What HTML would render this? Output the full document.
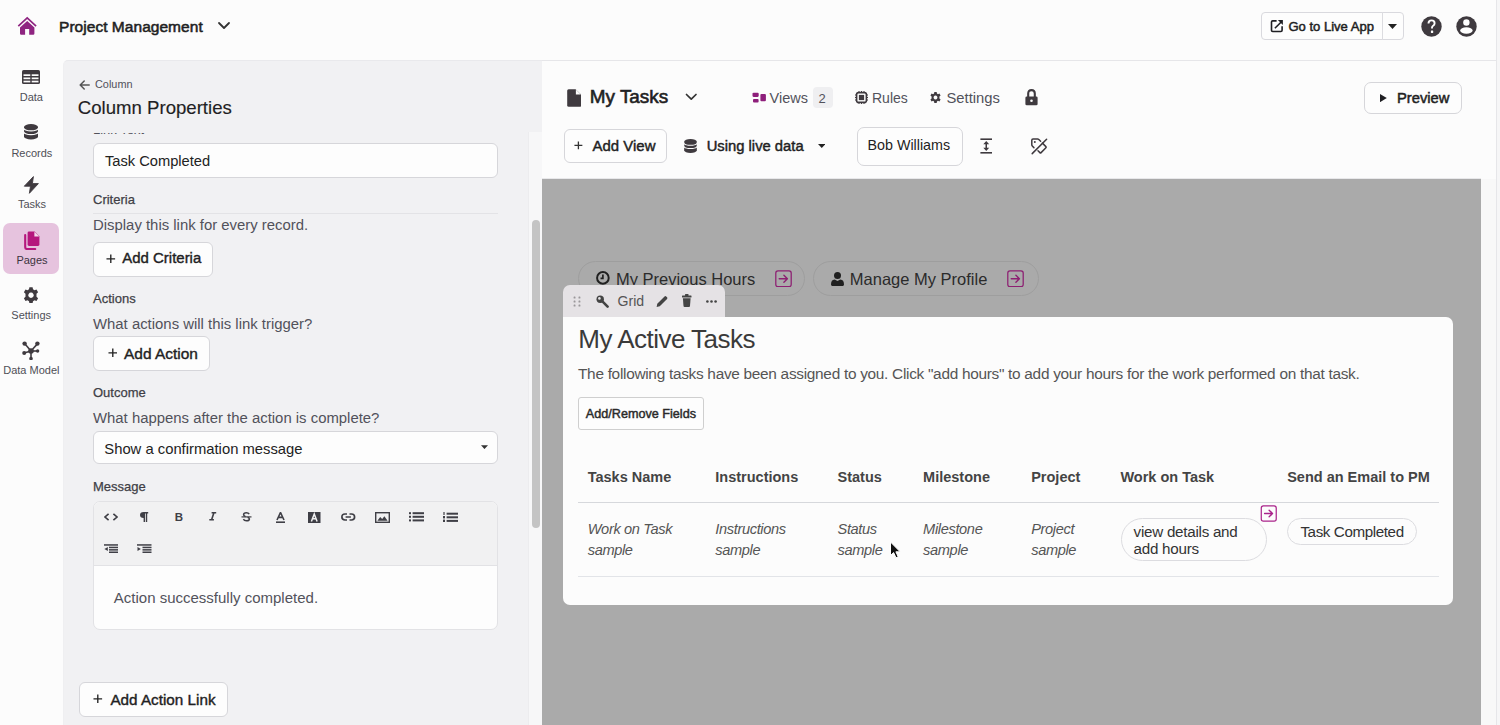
<!DOCTYPE html>
<html><head><meta charset="utf-8"><style>
html,body{margin:0;padding:0;}
body{width:1500px;height:725px;overflow:hidden;position:relative;background:#fcfcfc;font-family:"Liberation Sans",sans-serif;}
.t{position:absolute;white-space:nowrap;line-height:1;}
.r{position:absolute;display:block;}
</style></head><body>
<svg class="r" style="left:17px;top:16px;" width="20" height="20" viewBox="0 0 20 20"><path d="M1.3 10.2 L10.2 1.9 L19.1 10.2" stroke="#8f2581" stroke-width="1.7" fill="none" stroke-linejoin="miter"/><path d="M10.2 4.9 L17.4 11.4 V17.6 Q17.4 18.8 16.2 18.8 H12.2 V13 H8.1 V18.8 H4.2 Q3 18.8 3 17.6 V11.4 Z" fill="#8f2581"/></svg>
<div class="t" style="left:59.0px;top:19.38px;font-size:15.5px;font-weight:400;color:#1f1f23;font-style:normal;letter-spacing:0.04px;-webkit-text-stroke:0.55px #1f1f23;">Project Management</div>
<svg class="r" style="left:217px;top:21px;" width="14" height="9" viewBox="0 0 14 9"><path d="M2 2 L7 7 L12 2" stroke="#333" stroke-width="1.8" fill="none" stroke-linecap="round" stroke-linejoin="round"/></svg>
<div class="r" style="left:1261px;top:12px;width:143.0px;height:28.0px;border:1px solid #d9d9de;border-radius:4px;background:#fdfdfd;box-sizing:border-box"></div>
<div class="r" style="left:1382px;top:12px;width:1.0px;height:28.0px;background:#dcdce0"></div>
<svg class="r" style="left:1270px;top:19px;" width="14" height="14" viewBox="0 0 14 14"><path d="M6.6 1.9 H2.7 Q1.5 1.9 1.5 3.1 V11.3 Q1.5 12.5 2.7 12.5 H10.9 Q12.1 12.5 12.1 11.3 V7.3" stroke="#1f1f23" stroke-width="1.6" fill="none"/><path d="M4.9 9.3 L11.2 3" stroke="#1f1f23" stroke-width="1.6"/><path d="M7.9 1.1 H12.9 V6.1 Z" fill="#1f1f23"/></svg>
<div class="t" style="left:1288.4px;top:20.15px;font-size:13.05px;font-weight:400;color:#1f1f23;font-style:normal;-webkit-text-stroke:0.5px #1f1f23;">Go to Live App</div>
<svg class="r" style="left:1388px;top:24px;" width="9" height="5" viewBox="0 0 9 5"><path d="M0 0 H9 L4.5 5 Z" fill="#222"/></svg>
<svg class="r" style="left:1420.5px;top:16px;" width="21" height="21" viewBox="0 0 21 21"><circle cx="10.5" cy="10.5" r="10.2" fill="#3f3a3f"/><path d="M7.5 7.6 Q7.5 4.4 10.6 4.4 Q13.6 4.4 13.6 7.2 Q13.6 8.8 12.1 9.7 Q11 10.4 11 11.8 V12.6" stroke="#fff" stroke-width="1.9" fill="none" stroke-linecap="butt"/><rect x="9.9" y="14.6" width="2.3" height="2.3" rx="0.4" fill="#fff"/></svg>
<svg class="r" style="left:1456px;top:16px;" width="21" height="21" viewBox="0 0 21 21"><circle cx="10.5" cy="10.5" r="10.2" fill="#3f3a3f"/><circle cx="10.4" cy="6.5" r="3.2" fill="#fff"/><ellipse cx="10.4" cy="14.5" rx="6.2" ry="3.2" fill="#fff"/></svg>
<svg class="r" style="left:22px;top:70px;" width="18" height="14" viewBox="0 0 18 14"><rect x="0" y="0" width="18" height="14" rx="1.6" fill="#3f3a3f"/><g fill="#fcfcfc"><rect x="1.5" y="4.3" width="6.8" height="1.7"/><rect x="9.7" y="4.3" width="6.8" height="1.7"/><rect x="1.5" y="7.5" width="6.8" height="1.7"/><rect x="9.7" y="7.5" width="6.8" height="1.7"/><rect x="1.5" y="10.7" width="6.8" height="1.7"/><rect x="9.7" y="10.7" width="6.8" height="1.7"/></g></svg>
<div class="t" style="left:19.7px;top:92.29px;font-size:11px;font-weight:400;color:#4f4f57;font-style:normal;">Data</div>
<svg class="r" style="left:24.2px;top:124.3px;" width="14" height="15.5" viewBox="0 0 14 15.5"><path d="M0 3.1 A7 3.1 0 0 1 14 3.1 V12.4 A7 3.1 0 0 1 0 12.4 Z" fill="#3f3a3f"/><path d="M-0.5 3.8 A7.5 3.1 0 0 0 14.5 3.8 M-0.5 7.5 A7.5 3.1 0 0 0 14.5 7.5" stroke="#fcfcfc" stroke-width="1.15" fill="none"/></svg>
<div class="t" style="left:11.4px;top:147.69px;font-size:11px;font-weight:400;color:#4f4f57;font-style:normal;">Records</div>
<svg class="r" style="left:22px;top:174px;" width="20" height="22" viewBox="0 0 20 22"><path d="M11.4 2.6 L2.3 12.2 H8.5 L7.4 19.3 L16.4 9.6 H10.4 Z" fill="#3f3a3f" stroke="#3f3a3f" stroke-width="0.9" stroke-linejoin="round"/></svg>
<div class="t" style="left:17.9px;top:199.29px;font-size:11px;font-weight:400;color:#4f4f57;font-style:normal;">Tasks</div>
<div class="r" style="left:3px;top:222.5px;width:56.0px;height:51.5px;background:#e6c3de;border-radius:7px"></div>
<svg class="r" style="left:23.5px;top:230.5px;" width="16" height="19" viewBox="0 0 16 19"><path d="M1.2 4 V16.2 Q1.2 18 3 18 H11.2" stroke="#b5177d" stroke-width="2.1" fill="none" stroke-linecap="round"/><path d="M5 0.6 H10.6 L15.4 5.4 V13.6 Q15.4 15 14 15 H5 Q3.6 15 3.6 13.6 V2 Q3.6 0.6 5 0.6 Z" fill="#b5177d"/><path d="M10.4 0.8 V5.6 H15.2 Z" fill="#f2d9ea"/></svg>
<div class="t" style="left:16.4px;top:254.89px;font-size:11px;font-weight:400;color:#3b3340;font-style:normal;">Pages</div>
<svg class="r" style="left:23.2px;top:286.5px;" width="16" height="16.5" viewBox="-8 -8.25 16 16.5"><path fill="#3f3a3f" d="M-1.6 -8 H1.6 L2 -5.9 L3.5 -5 L5.5 -5.8 L7.1 -3 L5.5 -1.6 V1.6 L7.1 3 L5.5 5.8 L3.5 5 L2 5.9 L1.6 8 H-1.6 L-2 5.9 L-3.5 5 L-5.5 5.8 L-7.1 3 L-5.5 1.6 V-1.6 L-7.1 -3 L-5.5 -5.8 L-3.5 -5 L-2 -5.9 Z M0 -2.7 A2.7 2.7 0 1 0 0.01 -2.7 Z" fill-rule="evenodd"/></svg>
<div class="t" style="left:11.3px;top:309.69px;font-size:11px;font-weight:400;color:#4f4f57;font-style:normal;">Settings</div>
<svg class="r" style="left:21.5px;top:340.5px;" width="18" height="19.5" viewBox="0 0 18 19.5"><g stroke="#3f3a3f" stroke-width="1.6"><line x1="9" y1="10" x2="2.6" y2="2.6"/><line x1="9" y1="10" x2="15.6" y2="2.6"/><line x1="9" y1="10" x2="2" y2="12"/><line x1="9" y1="10" x2="15.6" y2="10"/><line x1="9" y1="10" x2="9" y2="17.5"/></g><g fill="#3f3a3f"><circle cx="2.6" cy="2.6" r="2.2"/><circle cx="15.4" cy="2.6" r="2.2"/><circle cx="9" cy="10" r="2.8"/><circle cx="2.2" cy="12" r="2"/><circle cx="15.6" cy="10" r="1.7"/><circle cx="9" cy="17.6" r="1.8"/></g></svg>
<div class="t" style="left:3.2px;top:365.19px;font-size:11px;font-weight:400;color:#4f4f57;font-style:normal;">Data Model</div>
<div class="r" style="left:62.8px;top:59.6px;width:479.2px;height:665.4px;background:#f1f1f3;border-top-left-radius:5px;border-top:1px solid #e9e9ec;border-left:1px solid #efeff1;box-sizing:border-box"></div>
<svg class="r" style="left:79px;top:79.5px;" width="11" height="10" viewBox="0 0 11 10"><path d="M10.2 5 H1.4 M5.2 1 L1.2 5 L5.2 9" stroke="#555" stroke-width="1.5" fill="none" stroke-linecap="round" stroke-linejoin="round"/></svg>
<div class="t" style="left:95.0px;top:79.17px;font-size:10.9px;font-weight:400;color:#52525b;font-style:normal;">Column</div>
<div class="t" style="left:77.8px;top:99.45px;font-size:18.6px;font-weight:400;color:#1f1f23;font-style:normal;-webkit-text-stroke:0.15px #1f1f23;">Column Properties</div>
<div class="r" style="left:528px;top:132px;width:14.0px;height:593.0px;background:#f7f7f8;border-left:1px solid #ececee;box-sizing:border-box"></div>
<div class="r" style="left:531.5px;top:220px;width:8.0px;height:308.0px;background:#c4c4c4;border-radius:4px"></div>
<div class="r" style="left:90px;top:133px;width:120px;height:1.6px;overflow:hidden"><div class="t" style="left:3px;top:-9.81px;font-size:13px;color:#52525b">Link Text</div></div>
<div class="r" style="left:93px;top:143px;width:405.0px;height:35.0px;background:#fdfdfd;border:1px solid #d6d6da;border-radius:6px;box-sizing:border-box"></div>
<div class="t" style="left:104.9px;top:153.85px;font-size:14.7px;font-weight:400;color:#222;font-style:normal;">Task Completed</div>
<div class="t" style="left:93.0px;top:192.99px;font-size:13px;font-weight:400;color:#3f3f46;font-style:normal;-webkit-text-stroke:0.25px #3f3f46;">Criteria</div>
<div class="r" style="left:93px;top:212.5px;width:405.0px;height:1.0px;background:#e3e3e6"></div>
<div class="t" style="left:93.0px;top:218.28px;font-size:14.9px;font-weight:400;color:#52525b;font-style:normal;">Display this link for every record.</div>
<div class="r" style="left:93px;top:242px;width:119.5px;height:34.5px;background:#fdfdfd;border:1px solid #d6d6da;border-radius:6px;box-sizing:border-box"></div>
<svg class="r" style="left:106px;top:254.45px;" width="9.6" height="9.6" viewBox="0 0 10 10"><path d="M5 0.5 V9.5 M0.5 5 H9.5" stroke="#222" stroke-width="1.4"/></svg>
<div class="t" style="left:122.3px;top:251.33px;font-size:14.96px;font-weight:400;color:#1f1f23;font-style:normal;-webkit-text-stroke:0.4px #1f1f23;">Add Criteria</div>
<div class="t" style="left:93.0px;top:291.89px;font-size:13px;font-weight:400;color:#3f3f46;font-style:normal;-webkit-text-stroke:0.25px #3f3f46;">Actions</div>
<div class="t" style="left:93.0px;top:316.98px;font-size:14.9px;font-weight:400;color:#52525b;font-style:normal;">What actions will this link trigger?</div>
<div class="r" style="left:93px;top:336px;width:116.5px;height:34.5px;background:#fdfdfd;border:1px solid #d6d6da;border-radius:6px;box-sizing:border-box"></div>
<svg class="r" style="left:107.5px;top:348.45px;" width="9.6" height="9.6" viewBox="0 0 10 10"><path d="M5 0.5 V9.5 M0.5 5 H9.5" stroke="#222" stroke-width="1.4"/></svg>
<div class="t" style="left:124.0px;top:345.61px;font-size:15.46px;font-weight:400;color:#1f1f23;font-style:normal;-webkit-text-stroke:0.4px #1f1f23;">Add Action</div>
<div class="t" style="left:93.0px;top:386.19px;font-size:13px;font-weight:400;color:#3f3f46;font-style:normal;-webkit-text-stroke:0.25px #3f3f46;">Outcome</div>
<div class="t" style="left:93.0px;top:410.78px;font-size:14.9px;font-weight:400;color:#52525b;font-style:normal;">What happens after the action is complete?</div>
<div class="r" style="left:93px;top:430.5px;width:405.0px;height:33.8px;background:#fdfdfd;border:1px solid #d6d6da;border-radius:6px;box-sizing:border-box"></div>
<div class="t" style="left:104.3px;top:441.87px;font-size:14.8px;font-weight:400;color:#222;font-style:normal;">Show a confirmation message</div>
<svg class="r" style="left:481.2px;top:445.3px;" width="7" height="4.2" viewBox="0 0 8 4.5"><path d="M0 0 H8 L4 4.5 Z" fill="#333"/></svg>
<div class="t" style="left:93.0px;top:480.39px;font-size:13px;font-weight:400;color:#3f3f46;font-style:normal;-webkit-text-stroke:0.25px #3f3f46;">Message</div>
<div class="r" style="left:93px;top:500.5px;width:405px;height:129.5px;border:1px solid #e2e2e5;border-radius:7px;box-sizing:border-box;overflow:hidden;background:#fdfdfd"><div class="r" style="left:0;top:0;width:405px;height:63.5px;background:#f1f1f2;border-bottom:1px solid #e2e2e5"></div></div>
<div class="t" style="left:113.8px;top:590.30px;font-size:15px;font-weight:400;color:#52525b;font-style:normal;">Action successfully completed.</div>
<div class="r" style="left:79px;top:682px;width:148.5px;height:34.5px;background:#fdfdfd;border:1px solid #d6d6da;border-radius:6px;box-sizing:border-box"></div>
<svg class="r" style="left:93.3px;top:694.45px;" width="9.6" height="9.6" viewBox="0 0 10 10"><path d="M5 0.5 V9.5 M0.5 5 H9.5" stroke="#222" stroke-width="1.4"/></svg>
<div class="t" style="left:110.4px;top:692.49px;font-size:15.25px;font-weight:400;color:#1f1f23;font-style:normal;-webkit-text-stroke:0.4px #1f1f23;">Add Action Link</div>
<div class="r" style="left:542px;top:59.6px;width:954.0px;height:1.0px;background:#e6e6e9"></div>
<div class="r" style="left:542px;top:177.5px;width:939.0px;height:1.0px;background:#e8e8ea"></div>
<div class="r" style="left:1496px;top:0px;width:1.0px;height:725.0px;background:#e6e6e9"></div>
<div class="r" style="left:1497px;top:0px;width:3.0px;height:725.0px;background:#f6f6f7"></div>
<svg class="r" style="left:566.5px;top:88.5px;" width="14.5" height="18" viewBox="0 0 14.5 18"><path d="M1.6 0.2 H8.6 L14.3 5.9 V16.2 Q14.3 17.8 12.7 17.8 H1.8 Q0.2 17.8 0.2 16.2 V1.8 Q0.2 0.2 1.6 0.2 Z" fill="#3f3a3f"/><path d="M8.9 0.6 V5.6 H13.9 Z" fill="#fcfcfc"/></svg>
<div class="t" style="left:589.8px;top:88.30px;font-size:18.9px;font-weight:400;color:#1f1f23;font-style:normal;-webkit-text-stroke:0.6px #1f1f23;">My Tasks</div>
<svg class="r" style="left:685px;top:93px;" width="12.5" height="8" viewBox="0 0 12.5 8"><path d="M1.5 1.5 L6.25 6.2 L11 1.5" stroke="#333" stroke-width="1.7" fill="none" stroke-linecap="round" stroke-linejoin="round"/></svg>
<svg class="r" style="left:751.5px;top:92px;" width="15" height="11" viewBox="0 0 15 11"><g fill="#8e1f7b"><rect x="0.5" y="0.7" width="6.2" height="4.2" rx="1.1"/><rect x="1" y="6.9" width="5.6" height="3.5" rx="1"/><rect x="8.4" y="1.9" width="5.5" height="7.3" rx="1"/></g></svg>
<div class="t" style="left:769.6px;top:90.92px;font-size:14.5px;font-weight:400;color:#52525b;font-style:normal;">Views</div>
<div class="r" style="left:812.8px;top:87px;width:20.0px;height:20.5px;background:#efeff1;border-radius:4px"></div>
<div class="t" style="left:818.5px;top:91.99px;font-size:13px;font-weight:400;color:#52525b;font-style:normal;">2</div>
<svg class="r" style="left:854.5px;top:91px;" width="13" height="13" viewBox="0 0 13 13"><rect x="1.6" y="1.6" width="9.8" height="9.8" rx="2" fill="none" stroke="#3f3a3f" stroke-width="1.6"/><rect x="3.9" y="3.9" width="5.2" height="5.2" fill="#3f3a3f"/><g stroke="#3f3a3f" stroke-width="1"><path d="M4 0 V1.6 M6.5 0 V1.6 M9 0 V1.6 M4 11.4 V13 M6.5 11.4 V13 M9 11.4 V13 M0 4 H1.6 M0 6.5 H1.6 M0 9 H1.6 M11.4 4 H13 M11.4 6.5 H13 M11.4 9 H13"/></g></svg>
<div class="t" style="left:872.0px;top:91.35px;font-size:14px;font-weight:400;color:#52525b;font-style:normal;">Rules</div>
<svg class="r" style="left:930px;top:92px;" width="11" height="11" viewBox="-8 -8 16 16"><path fill="#3f3a3f" d="M-1.7 -8 H1.7 L2.1 -5.8 L3.6 -4.9 L5.7 -5.7 L7.4 -2.8 L5.7 -1.5 V1.5 L7.4 2.8 L5.7 5.7 L3.6 4.9 L2.1 5.8 L1.7 8 H-1.7 L-2.1 5.8 L-3.6 4.9 L-5.7 5.7 L-7.4 2.8 L-5.7 1.5 V-1.5 L-7.4 -2.8 L-5.7 -5.7 L-3.6 -4.9 L-2.1 -5.8 Z M0 -2.8 A2.8 2.8 0 1 0 0.01 -2.8 Z" fill-rule="evenodd"/></svg>
<div class="t" style="left:946.5px;top:90.67px;font-size:14.8px;font-weight:400;color:#52525b;font-style:normal;">Settings</div>
<svg class="r" style="left:1025px;top:89px;" width="13" height="16.5" viewBox="0 0 13 16.5"><path d="M3.2 8 V4.6 Q3.2 1.1 6.5 1.1 Q9.8 1.1 9.8 4.6 V8" stroke="#3f3a3f" stroke-width="2.1" fill="none"/><rect x="0.4" y="7.4" width="12.2" height="8.9" rx="1.4" fill="#3f3a3f"/><circle cx="6.5" cy="11.8" r="1.3" fill="#fcfcfc"/></svg>
<div class="r" style="left:1364px;top:82px;width:97.5px;height:32.0px;background:#fdfdfd;border:1px solid #d6d6da;border-radius:7px;box-sizing:border-box"></div>
<svg class="r" style="left:1379.8px;top:93.5px;" width="6.8" height="8.2" viewBox="0 0 6.8 8.2"><path d="M0 0 L6.8 4.1 L0 8.2 Z" fill="#1f1f23"/></svg>
<div class="t" style="left:1397.0px;top:90.60px;font-size:14.76px;font-weight:400;color:#1f1f23;font-style:normal;-webkit-text-stroke:0.5px #1f1f23;">Preview</div>
<div class="r" style="left:563.5px;top:128.5px;width:103.5px;height:34.5px;background:#fdfdfd;border:1px solid #d6d6da;border-radius:6px;box-sizing:border-box"></div>
<svg class="r" style="left:573.8px;top:141px;" width="8.8" height="8.8" viewBox="0 0 10 10"><path d="M5 0.5 V9.5 M0.5 5 H9.5" stroke="#333" stroke-width="1.5"/></svg>
<div class="t" style="left:592.6px;top:138.84px;font-size:14.95px;font-weight:400;color:#1f1f23;font-style:normal;-webkit-text-stroke:0.45px #1f1f23;">Add View</div>
<svg class="r" style="left:684px;top:139px;" width="13" height="14" viewBox="0 0 14 15.5"><path d="M0 3.1 A7 3.1 0 0 1 14 3.1 V12.4 A7 3.1 0 0 1 0 12.4 Z" fill="#3f3a3f"/><path d="M-0.5 3.8 A7.5 3.1 0 0 0 14.5 3.8 M-0.5 7.5 A7.5 3.1 0 0 0 14.5 7.5" stroke="#fcfcfc" stroke-width="1.15" fill="none"/></svg>
<div class="t" style="left:706.7px;top:139.38px;font-size:14.79px;font-weight:400;color:#1f1f23;font-style:normal;-webkit-text-stroke:0.45px #1f1f23;">Using live data</div>
<svg class="r" style="left:817.5px;top:144px;" width="7.5" height="4" viewBox="0 0 7.5 4"><path d="M0 0 H7.5 L3.75 4 Z" fill="#222"/></svg>
<div class="r" style="left:856.5px;top:126.5px;width:106.0px;height:39.0px;background:#fdfdfd;border:1px solid #d6d6da;border-radius:7px;box-sizing:border-box"></div>
<div class="t" style="left:867.5px;top:138.39px;font-size:14.3px;font-weight:400;color:#1f1f23;font-style:normal;">Bob Williams</div>
<svg class="r" style="left:979.5px;top:138px;" width="12.5" height="16" viewBox="0 0 12.5 16"><g fill="#3f3a3f"><rect x="0.4" y="0.4" width="11.8" height="1.6"/><rect x="0.4" y="14" width="11.8" height="1.6"/><rect x="5.5" y="5" width="1.5" height="6"/><path d="M6.25 3 L9.2 6.2 H3.3 Z M6.25 13 L9.2 9.8 H3.3 Z"/></g></svg>
<svg class="r" style="left:1031px;top:138px;" width="16.5" height="16.5" viewBox="0 0 16.5 16.5"><g stroke="#3f3a3f" stroke-width="1.5" fill="none" stroke-linejoin="round" stroke-linecap="round"><path d="M2.9 9.6 L1.3 8 Q0.8 7.5 0.8 6.8 V2.2 Q0.8 1 2 1 H6.6 Q7.3 1 7.8 1.5 L9.6 3.3"/><path d="M11.4 5.1 L14.9 8.6 Q15.5 9.2 14.9 9.8 L10.1 14.6 Q9.5 15.2 8.9 14.6 L7 12.7"/><path d="M15.6 1.2 L1.2 15.6"/></g><circle cx="3.8" cy="4" r="1" fill="#3f3a3f"/></svg>
<div class="r" style="left:542px;top:178.5px;width:939.0px;height:546.5px;background:#aaaaaa"></div>
<div class="r" style="left:1481px;top:178.5px;width:15.0px;height:546.5px;background:#f8f8f8"></div>
<div class="r" style="left:578px;top:260.5px;width:226.5px;height:35.5px;border:1px solid #9e9e9e;border-radius:18px;box-sizing:border-box"></div>
<svg class="r" style="left:596.2px;top:271.3px;" width="13.8" height="13.8" viewBox="0 0 14 14"><circle cx="7" cy="7" r="5.9" fill="none" stroke="#202020" stroke-width="2"/><path d="M7 3.6 V7.4 H4.6" stroke="#202020" stroke-width="1.7" fill="none"/></svg>
<div class="t" style="left:615.9px;top:270.63px;font-size:16.5px;font-weight:400;color:#2b2b2b;font-style:normal;">My Previous Hours</div>
<svg class="r" style="left:775px;top:269.5px;" width="17" height="17.5" viewBox="0 0 17 17.5"><rect x="0.8" y="0.8" width="15.4" height="15.9" rx="2.2" fill="none" stroke="#8d1f72" stroke-width="1.25"/><path d="M4.2 8.75 H12.2 M8.9 5.3 L12.4 8.75 L8.9 12.2" stroke="#8d1f72" stroke-width="1.4" fill="none" stroke-linecap="round" stroke-linejoin="round"/></svg>
<div class="r" style="left:812.5px;top:260.5px;width:226.0px;height:35.5px;border:1px solid #9e9e9e;border-radius:18px;box-sizing:border-box"></div>
<svg class="r" style="left:830.8px;top:271.5px;" width="13" height="14" viewBox="0 0 13 14"><circle cx="6.5" cy="3.6" r="3.5" fill="#202020"/><path d="M0 12.6 Q0 7.8 3.6 7.6 L6.5 9 L9.4 7.6 Q13 7.8 13 12.6 Q13 14 11.8 14 H1.2 Q0 14 0 12.6 Z" fill="#202020"/></svg>
<div class="t" style="left:849.8px;top:270.63px;font-size:16.5px;font-weight:400;color:#2b2b2b;font-style:normal;">Manage My Profile</div>
<svg class="r" style="left:1006.5px;top:269.5px;" width="17" height="17.5" viewBox="0 0 17 17.5"><rect x="0.8" y="0.8" width="15.4" height="15.9" rx="2.2" fill="none" stroke="#8d1f72" stroke-width="1.25"/><path d="M4.2 8.75 H12.2 M8.9 5.3 L12.4 8.75 L8.9 12.2" stroke="#8d1f72" stroke-width="1.4" fill="none" stroke-linecap="round" stroke-linejoin="round"/></svg>
<div class="r" style="left:563px;top:285px;width:162.0px;height:32.0px;background:#e5e2e5;border-radius:7px 7px 0 0"></div>
<svg class="r" style="left:572.5px;top:295.5px;" width="8" height="11" viewBox="0 0 8 11"><g fill="#9a979a"><rect x="0.6" y="0.6" width="1.9" height="1.9" rx="0.6"/><rect x="5.5" y="0.6" width="1.9" height="1.9" rx="0.6"/><rect x="0.6" y="4.6" width="1.9" height="1.9" rx="0.6"/><rect x="5.5" y="4.6" width="1.9" height="1.9" rx="0.6"/><rect x="0.6" y="8.6" width="1.9" height="1.9" rx="0.6"/><rect x="5.5" y="8.6" width="1.9" height="1.9" rx="0.6"/></g></svg>
<svg class="r" style="left:595.5px;top:294.5px;" width="13" height="13" viewBox="0 0 13 13"><circle cx="4.2" cy="4.2" r="3.7" fill="#444"/><path d="M4.2 4.2 L11.6 11.6" stroke="#444" stroke-width="2.6" stroke-linecap="round"/><circle cx="3.4" cy="3.4" r="1.3" fill="#e5e2e5"/></svg>
<div class="t" style="left:617.5px;top:293.86px;font-size:14.1px;font-weight:400;color:#555;font-style:normal;">Grid</div>
<svg class="r" style="left:656px;top:294.5px;" width="12.5" height="12.5" viewBox="0 0 12 12"><path d="M0.6 11.4 L1.2 8.4 L8.2 1.4 Q9 0.6 9.8 1.4 L10.6 2.2 Q11.4 3 10.6 3.8 L3.6 10.8 Z" fill="#444"/></svg>
<svg class="r" style="left:682px;top:294px;" width="9.5" height="13" viewBox="0 0 9.5 13"><rect x="0" y="1.6" width="9.5" height="1.8" rx="0.5" fill="#444"/><rect x="3" y="0" width="3.5" height="2" rx="0.6" fill="#444"/><path d="M0.9 4.2 H8.6 L8 12 Q7.9 12.9 7 12.9 H2.5 Q1.6 12.9 1.5 12 Z" fill="#444"/></svg>
<svg class="r" style="left:705.5px;top:299.5px;" width="11" height="3" viewBox="0 0 11 3"><g fill="#444"><circle cx="1.4" cy="1.5" r="1.3"/><circle cx="5.5" cy="1.5" r="1.3"/><circle cx="9.6" cy="1.5" r="1.3"/></g></svg>
<div class="r" style="left:563px;top:316.5px;width:889.5px;height:288.0px;background:#fcfcfc;border-radius:0 7px 7px 7px"></div>
<div class="t" style="left:578.3px;top:326.29px;font-size:26px;font-weight:400;color:#3a3a3a;font-style:normal;letter-spacing:-0.52px;">My Active Tasks</div>
<div class="t" style="left:578.0px;top:365.66px;font-size:15.4px;font-weight:400;color:#555;font-style:normal;letter-spacing:-0.29px;">The following tasks have been assigned to you. Click "add hours" to add your hours for the work performed on that task.</div>
<div class="r" style="left:577.5px;top:397px;width:126.5px;height:32.5px;border:1px solid #cfcfcf;border-radius:3px;box-sizing:border-box;background:#fdfdfd"></div>
<div class="t" style="left:585.8px;top:408.40px;font-size:12.64px;font-weight:400;color:#2a2a2a;font-style:normal;-webkit-text-stroke:0.45px #2a2a2a;">Add/Remove Fields</div>
<div class="t" style="left:587.7px;top:470.32px;font-size:14.5px;font-weight:700;color:#444;font-style:normal;">Tasks Name</div>
<div class="t" style="left:715.3px;top:470.32px;font-size:14.5px;font-weight:700;color:#444;font-style:normal;">Instructions</div>
<div class="t" style="left:837.5px;top:470.32px;font-size:14.5px;font-weight:700;color:#444;font-style:normal;">Status</div>
<div class="t" style="left:923.1px;top:470.32px;font-size:14.5px;font-weight:700;color:#444;font-style:normal;">Milestone</div>
<div class="t" style="left:1031.2px;top:470.32px;font-size:14.5px;font-weight:700;color:#444;font-style:normal;">Project</div>
<div class="t" style="left:1120.4px;top:470.32px;font-size:14.5px;font-weight:700;color:#444;font-style:normal;">Work on Task</div>
<div class="t" style="left:1287.2px;top:470.32px;font-size:14.5px;font-weight:700;color:#444;font-style:normal;">Send an Email to PM</div>
<div class="r" style="left:577.5px;top:502px;width:861.0px;height:1.3px;background:#d6d8dc"></div>
<div class="t" style="left:587.7px;top:522.44px;font-size:14.6px;font-weight:400;color:#555;font-style:italic;letter-spacing:-0.35px;">Work on Task</div>
<div class="t" style="left:587.7px;top:542.84px;font-size:14.6px;font-weight:400;color:#555;font-style:italic;letter-spacing:-0.35px;">sample</div>
<div class="t" style="left:715.3px;top:522.44px;font-size:14.6px;font-weight:400;color:#555;font-style:italic;letter-spacing:-0.35px;">Instructions</div>
<div class="t" style="left:715.3px;top:542.84px;font-size:14.6px;font-weight:400;color:#555;font-style:italic;letter-spacing:-0.35px;">sample</div>
<div class="t" style="left:837.5px;top:522.44px;font-size:14.6px;font-weight:400;color:#555;font-style:italic;letter-spacing:-0.35px;">Status</div>
<div class="t" style="left:837.5px;top:542.84px;font-size:14.6px;font-weight:400;color:#555;font-style:italic;letter-spacing:-0.35px;">sample</div>
<div class="t" style="left:923.1px;top:522.44px;font-size:14.6px;font-weight:400;color:#555;font-style:italic;letter-spacing:-0.35px;">Milestone</div>
<div class="t" style="left:923.1px;top:542.84px;font-size:14.6px;font-weight:400;color:#555;font-style:italic;letter-spacing:-0.35px;">sample</div>
<div class="t" style="left:1031.2px;top:522.44px;font-size:14.6px;font-weight:400;color:#555;font-style:italic;letter-spacing:-0.35px;">Project</div>
<div class="t" style="left:1031.2px;top:542.84px;font-size:14.6px;font-weight:400;color:#555;font-style:italic;letter-spacing:-0.35px;">sample</div>
<div class="r" style="left:1121px;top:518px;width:145.5px;height:42.5px;border:1px solid #dcdce0;border-radius:22px;box-sizing:border-box"></div>
<div class="t" style="left:1133.6px;top:524.33px;font-size:15.2px;font-weight:400;color:#333;font-style:normal;letter-spacing:-0.26px;">view details and</div>
<div class="t" style="left:1133.6px;top:541.13px;font-size:15.2px;font-weight:400;color:#333;font-style:normal;letter-spacing:-0.26px;">add hours</div>
<svg class="r" style="left:1259.5px;top:505px;" width="17.5" height="17" viewBox="0 0 17 17.5"><rect x="0.8" y="0.8" width="15.4" height="15.9" rx="2.2" fill="#fcfcfc" stroke="#a9238a" stroke-width="1.25"/><path d="M4.2 8.75 H12.2 M8.9 5.3 L12.4 8.75 L8.9 12.2" stroke="#a9238a" stroke-width="1.4" fill="none" stroke-linecap="round" stroke-linejoin="round"/></svg>
<div class="r" style="left:1287px;top:518px;width:130.0px;height:26.5px;border:1px solid #dcdce0;border-radius:14px;box-sizing:border-box"></div>
<div class="t" style="left:1300.4px;top:524.33px;font-size:15.2px;font-weight:400;color:#333;font-style:normal;letter-spacing:-0.4px;">Task Completed</div>
<div class="r" style="left:577.5px;top:576.2px;width:861.0px;height:1.0px;background:#e2e4e8"></div>
<svg class="r" style="left:889px;top:541px;" width="13" height="18" viewBox="0 0 13 18"><path d="M1.5 1 V14.5 L4.6 11.6 L7 16.8 L9.2 15.8 L6.9 10.8 L11.2 10.8 Z" fill="#111" stroke="#fff" stroke-width="1"/></svg>
<svg class="r" style="left:103.5px;top:513px;" width="14" height="8" viewBox="0 0 14 8"><path d="M4.6 0.8 L1 4 L4.6 7.2 M9.4 0.8 L13 4 L9.4 7.2" stroke="#3f3f46" stroke-width="1.6" fill="none"/></svg>
<svg class="r" style="left:140px;top:512px;" width="8.5" height="10" viewBox="0 0 8.5 10"><path d="M3.6 0 H8.2 V1.4 H7.2 V10 H5.8 V1.4 H5 V10 H3.6 V6 Q0 6 0 3 Q0 0 3.6 0 Z" fill="#3f3f46"/></svg>
<div class="t" style="left:174.8px;top:511.56px;font-size:11.5px;font-weight:700;color:#3f3f46;font-style:normal;">B</div>
<svg class="r" style="left:209px;top:512.3px;" width="7.5" height="8.6" viewBox="0 0 7.5 8.6"><path d="M2.6 0.8 H7.2 M0.3 7.8 H4.9 M4.9 0.8 L2.6 7.8" stroke="#3f3f46" stroke-width="1.6" fill="none"/></svg>
<svg class="r" style="left:241px;top:512px;" width="11" height="9.5" viewBox="0 0 11 9.5"><path d="M8.2 2.2 Q7.4 0.8 5.4 0.8 Q2.6 0.8 2.6 2.8 Q2.6 4 4.6 4.6 M6.6 5.2 Q8.4 5.8 8.4 7 Q8.4 8.8 5.4 8.8 Q3.2 8.8 2.4 7.2" stroke="#3f3f46" stroke-width="1.5" fill="none"/><path d="M0.5 4.9 H10.5" stroke="#3f3f46" stroke-width="1.2"/></svg>
<svg class="r" style="left:275.5px;top:512px;" width="9" height="11" viewBox="0 0 9 11"><path d="M1 8 L4.5 0.5 L8 8 M2.3 5.4 H6.7" stroke="#3f3f46" stroke-width="1.6" fill="none"/><rect x="0" y="9.4" width="9" height="1.6" fill="#3f3f46"/></svg>
<svg class="r" style="left:308px;top:511.5px;" width="12.5" height="11" viewBox="0 0 12.5 11"><rect width="12.5" height="11" fill="#3f3f46"/><path d="M3.4 9.4 L6.25 2 L9.1 9.4 M4.5 6.8 H8" stroke="#f1f1f2" stroke-width="1.5" fill="none"/></svg>
<svg class="r" style="left:341px;top:513px;" width="14.5" height="8" viewBox="0 0 14.5 8"><path d="M6 1 H4 Q0.9 1 0.9 4 Q0.9 7 4 7 H6 M8.5 1 H10.5 Q13.6 1 13.6 4 Q13.6 7 10.5 7 H8.5 M4.6 4 H9.9" stroke="#3f3f46" stroke-width="1.7" fill="none"/></svg>
<svg class="r" style="left:374.5px;top:511.5px;" width="15" height="11" viewBox="0 0 15 11"><rect x="0.7" y="0.7" width="13.6" height="9.6" fill="none" stroke="#3f3f46" stroke-width="1.4"/><path d="M2.4 8.8 L5.2 5 L7.2 7 L9.4 4.2 L12.6 8.8 Z" fill="#3f3f46"/></svg>
<svg class="r" style="left:408.5px;top:512px;" width="15" height="9.5" viewBox="0 0 15 9.5"><g fill="#3f3f46"><rect x="0" y="0.2" width="2" height="2"/><rect x="0" y="3.8" width="2" height="2"/><rect x="0" y="7.4" width="2" height="2"/><rect x="3.6" y="0.2" width="11.4" height="2"/><rect x="3.6" y="3.8" width="11.4" height="2"/><rect x="3.6" y="7.4" width="11.4" height="2"/></g></svg>
<svg class="r" style="left:442.5px;top:511.5px;" width="15" height="10.5" viewBox="0 0 15 10.5"><g fill="#3f3f46"><rect x="0.4" y="0" width="1.2" height="3"/><rect x="0" y="4" width="2" height="2.4"/><rect x="0" y="7.6" width="2" height="2.6"/><rect x="3.6" y="0.7" width="11.4" height="2"/><rect x="3.6" y="4.3" width="11.4" height="2"/><rect x="3.6" y="7.9" width="11.4" height="2"/></g></svg>
<svg class="r" style="left:103.5px;top:544.3px;" width="14" height="9" viewBox="0 0 14 9"><g fill="#3f3f46"><rect x="0" y="0.2" width="14" height="1.5"/><rect x="5" y="2.7" width="9" height="1.5"/><rect x="5" y="5.1" width="9" height="1.5"/><rect x="5" y="7.5" width="9" height="1.5"/><path d="M0.4 4.9 L3.8 2.9 V6.9 Z"/></g></svg>
<svg class="r" style="left:137px;top:544.3px;" width="14.5" height="9" viewBox="0 0 14.5 9"><g fill="#3f3f46"><rect x="0" y="0.2" width="14.5" height="1.5"/><rect x="5.5" y="2.7" width="9" height="1.5"/><rect x="5.5" y="5.1" width="9" height="1.5"/><rect x="5.5" y="7.5" width="9" height="1.5"/><path d="M3.9 4.9 L0.5 2.9 V6.9 Z"/></g></svg>
</body></html>
